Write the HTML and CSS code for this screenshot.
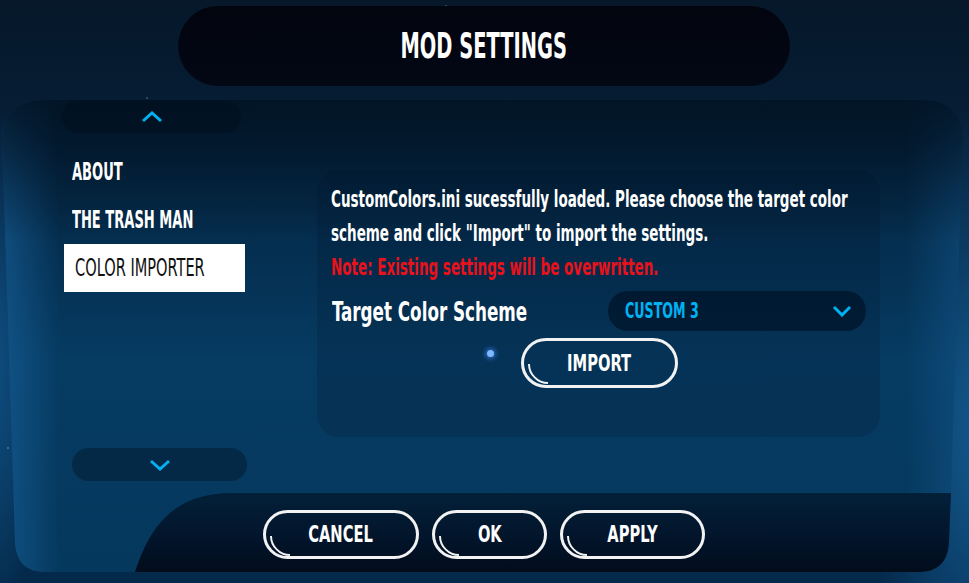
FILE: index.html
```html
<!DOCTYPE html>
<html>
<head>
<meta charset="utf-8">
<link rel="stylesheet" href="styles.css">
</head>
<body>
<div class="stage">
  <svg class="backdrop" width="969" height="583" viewBox="0 0 969 583" aria-hidden="true">
    <defs>
      <linearGradient id="panelV" x1="0" y1="0" x2="0" y2="1">
        <stop offset="0" stop-color="#021527"/>
        <stop offset="0.18" stop-color="#042846"/>
        <stop offset="0.55" stop-color="#063b62"/>
        <stop offset="1" stop-color="#05385d"/>
      </linearGradient>
      <linearGradient id="panelH" x1="0" y1="0" x2="1" y2="0">
        <stop offset="0" stop-color="#1a68a6" stop-opacity="0.55"/>
        <stop offset="0.06" stop-color="#1a68a6" stop-opacity="0"/>
        <stop offset="0.94" stop-color="#1a68a6" stop-opacity="0"/>
        <stop offset="1" stop-color="#1a68a6" stop-opacity="0.35"/>
      </linearGradient>
      <linearGradient id="topShade" x1="0" y1="0" x2="0" y2="1">
        <stop offset="0" stop-color="#021527" stop-opacity="0.9"/>
        <stop offset="0.3" stop-color="#021527" stop-opacity="0"/>
      </linearGradient>
      <linearGradient id="footerV" x1="0" y1="0" x2="0" y2="1">
        <stop offset="0" stop-color="#032039"/>
        <stop offset="0.6" stop-color="#02142a"/>
        <stop offset="1" stop-color="#020c1b"/>
      </linearGradient>
    </defs>
    <path d="M2,142 C2,116 16,100 44,100 L923,100 C950,100 963,115 963,140 L949,542 C948,562 938,572 918,572 L45,572 C26,572 16,562 15,542 Z" fill="url(#panelV)"/>
    <path d="M2,142 C2,116 16,100 44,100 L923,100 C950,100 963,115 963,140 L949,542 C948,562 938,572 918,572 L45,572 C26,572 16,562 15,542 Z" fill="url(#panelH)"/>
    <path d="M2,142 C2,116 16,100 44,100 L923,100 C950,100 963,115 963,140 L949,542 C948,562 938,572 918,572 L45,572 C26,572 16,562 15,542 Z" fill="url(#topShade)"/>
    <path d="M135,572 C150,525 175,493 232,493 L951,493 L949,542 C948,562 938,572 918,572 Z" fill="url(#footerV)"/>
    <circle cx="446" cy="6" r="0.8" fill="#5a8fb0"/>
    <circle cx="8" cy="448" r="0.8" fill="#7aa3c4"/>
    <circle cx="147" cy="98" r="0.8" fill="#4a86b0"/>
  </svg>
  <header class="title-pill"><h1 class="title"><span class="sx sx-title">MOD SETTINGS</span></h1></header>
  <main class="panel">
    <div class="panel-body">
      <nav class="sidebar">
        <div class="scroll-pill scroll-up">
          <svg width="22" height="12" viewBox="0 0 22 12"><polyline points="2,10 11,2 20,10" fill="none" stroke="#00b2f2" stroke-width="3"/></svg>
        </div>
        <div class="menu-item"><span class="sx sx-menu">ABOUT</span></div>
        <div class="menu-item"><span class="sx sx-menu">THE TRASH MAN</span></div>
        <div class="menu-item selected"><span class="sx sx-sel">COLOR IMPORTER</span></div>
        <div class="scroll-pill scroll-down">
          <svg width="22" height="12" viewBox="0 0 22 12"><polyline points="2,2 11,10 20,2" fill="none" stroke="#00b2f2" stroke-width="3"/></svg>
        </div>
      </nav>
      <section class="card">
        <p class="info"><span class="sx sx-body">CustomColors.ini sucessfully loaded. Please choose the target color</span><br><span class="sx sx-body">scheme and click "Import" to import the settings.</span></p>
        <p class="warn"><span class="sx sx-body">Note: Existing settings will be overwritten.</span></p>
        <div class="scheme-row">
          <span class="scheme-label"><span class="sx sx-label">Target Color Scheme</span></span>
          <div class="dropdown">
            <span class="dropdown-value"><span class="sx sx-drop">CUSTOM 3</span></span>
            <svg width="20" height="12" viewBox="0 0 20 12"><polyline points="2,2 10,10 18,2" fill="none" stroke="#00b2f2" stroke-width="3"/></svg>
          </div>
        </div>
        <div class="import-row">
          <span class="cursor-dot"></span>
          <button class="btn import"><span class="sx sx-btn">IMPORT</span></button>
        </div>
      </section>
    </div>
    <footer class="footer">
      <button class="btn cancel"><span class="sx sx-btn">CANCEL</span></button>
      <button class="btn ok"><span class="sx sx-btn">OK</span></button>
      <button class="btn apply"><span class="sx sx-btn">APPLY</span></button>
    </footer>
  </main>
</div>
</body>
</html>
```
FILE: styles.css
```css
* { box-sizing: border-box; }
html, body { margin: 0; padding: 0; }
body {
  width: 969px;
  height: 583px;
  overflow: hidden;
  font-family: "DejaVu Sans Condensed", "DejaVu Sans", sans-serif;
  font-stretch: condensed;
  color: #fff;
  background:
    radial-gradient(ellipse 120px 330px at 985px 430px, #13598f 0%, rgba(19,89,143,0) 100%),
    radial-gradient(ellipse 60px 260px at -10px 360px, #105086 0%, rgba(16,80,134,0) 100%),
    linear-gradient(180deg, #06182a 0%, #06203a 30%, #053050 75%, #04294a 100%);
}
.stage {
  position: relative;
  width: 969px;
  height: 583px;
  overflow: hidden;
  display: flex;
  flex-direction: column;
  padding-top: 6px;
}
.backdrop {
  position: absolute;
  left: 0;
  top: 0;
  z-index: 0;
}
.title-pill, .panel { position: relative; z-index: 1; }

.sx { display: inline-block; white-space: nowrap; transform-origin: left center; }
.sx-title { transform: scaleX(0.60); transform-origin: center; }
.sx-menu { transform: scaleX(0.605); }
.sx-sel { transform: scaleX(0.675); }
.sx-body { transform: scaleX(0.652); }
.sx-label { transform: scaleX(0.69); }
.sx-drop { transform: scaleX(0.67); }
.sx-btn { transform: scaleX(0.71); transform-origin: center; }

.title-pill {
  margin-left: 178px;
  width: 612px;
  height: 80px;
  border-radius: 40px;
  background: linear-gradient(180deg, #02040e 0%, #030815 100%);
  display: flex;
  align-items: center;
  justify-content: center;
}
.title {
  margin: 0;
  font-size: 36px;
  font-weight: bold;
  line-height: 1;
}
.panel {
  margin-top: 14px;
  width: 963px;
  height: 472px;
  display: flex;
  flex-direction: column;
}
.panel-body {
  height: 393px;
  display: flex;
}
.sidebar {
  margin-left: 62px;
  width: 185px;
  flex: none;
  display: flex;
  flex-direction: column;
}
.scroll-pill {
  height: 33px;
  border-radius: 17px;
  background: rgba(0, 14, 30, 0.5);
  display: flex;
  align-items: center;
  justify-content: center;
}
.scroll-up { width: 179px; margin-bottom: 15px; }
.scroll-down { width: 175px; margin-left: 10px; margin-top: auto; margin-bottom: 12px; background: rgba(0, 18, 36, 0.4); }
.menu-item {
  height: 48px;
  margin-left: 2px;
  width: 181px;
  padding-left: 8px;
  display: flex;
  align-items: center;
  overflow: hidden;
  font-size: 24px;
  font-weight: bold;
  line-height: 1;
}
.menu-item.selected {
  background: #fff;
  color: #111;
  padding-left: 11px;
  font-weight: normal;
}
.card {
  margin-left: 70px;
  margin-top: 70px;
  width: 563px;
  height: 267px;
  flex: none;
  overflow: hidden;
  border-radius: 22px;
  background: rgba(0, 14, 32, 0.16);
  padding: 12px 14px 0 14px;
}
.info, .warn {
  margin: 0;
  font-size: 23px;
  font-weight: bold;
  line-height: 34px;
  white-space: nowrap;
}
.warn { color: #e8121c; }
.scheme-row {
  margin-top: 7px;
  display: flex;
  align-items: center;
  padding-left: 1px;
}
.scheme-label {
  flex: 1;
  min-width: 0;
  font-size: 27px;
  font-weight: bold;
  line-height: 1;
}
.dropdown {
  flex: none;
  width: 258px;
  height: 40px;
  border-radius: 20px;
  background: rgba(0, 20, 40, 0.72);
  display: flex;
  align-items: center;
  justify-content: space-between;
  padding: 0 14px 0 17px;
}
.dropdown-value {
  color: #00b2f2;
  font-size: 21px;
  font-weight: bold;
  line-height: 1;
}
.import-row {
  margin-top: 7px;
  display: flex;
  align-items: flex-start;
  padding-left: 156px;
}
.cursor-dot {
  width: 7px;
  height: 7px;
  margin-top: 12px;
  margin-right: 27px;
  border-radius: 50%;
  background: #7ab8ff;
  box-shadow: 0 0 4px 2px rgba(70, 140, 255, 0.55);
}
.btn {
  position: relative;
  height: 50px;
  border: 3px solid #f2f2f2;
  border-radius: 25px;
  background: transparent;
  color: #fff;
  font-family: inherit;
  font-stretch: condensed;
  font-size: 23px;
  font-weight: bold;
  line-height: 1;
  padding: 0;
  display: flex;
  align-items: center;
  justify-content: center;
}
.btn::before {
  content: "";
  position: absolute;
  left: 4px;
  top: 3px;
  width: 36px;
  height: 36px;
  border-radius: 50%;
  border: 2.5px solid transparent;
  border-bottom-color: #f2f2f2;
  transform: rotate(45deg);
}
.import { width: 157px; }
.footer {
  flex: 1;
  display: flex;
  align-items: flex-start;
  padding-top: 17px;
  padding-left: 263px;
  gap: 13px;
}
.cancel { width: 156px; height: 49px; }
.ok { width: 115px; height: 49px; }
.apply { width: 145px; height: 49px; }
```
